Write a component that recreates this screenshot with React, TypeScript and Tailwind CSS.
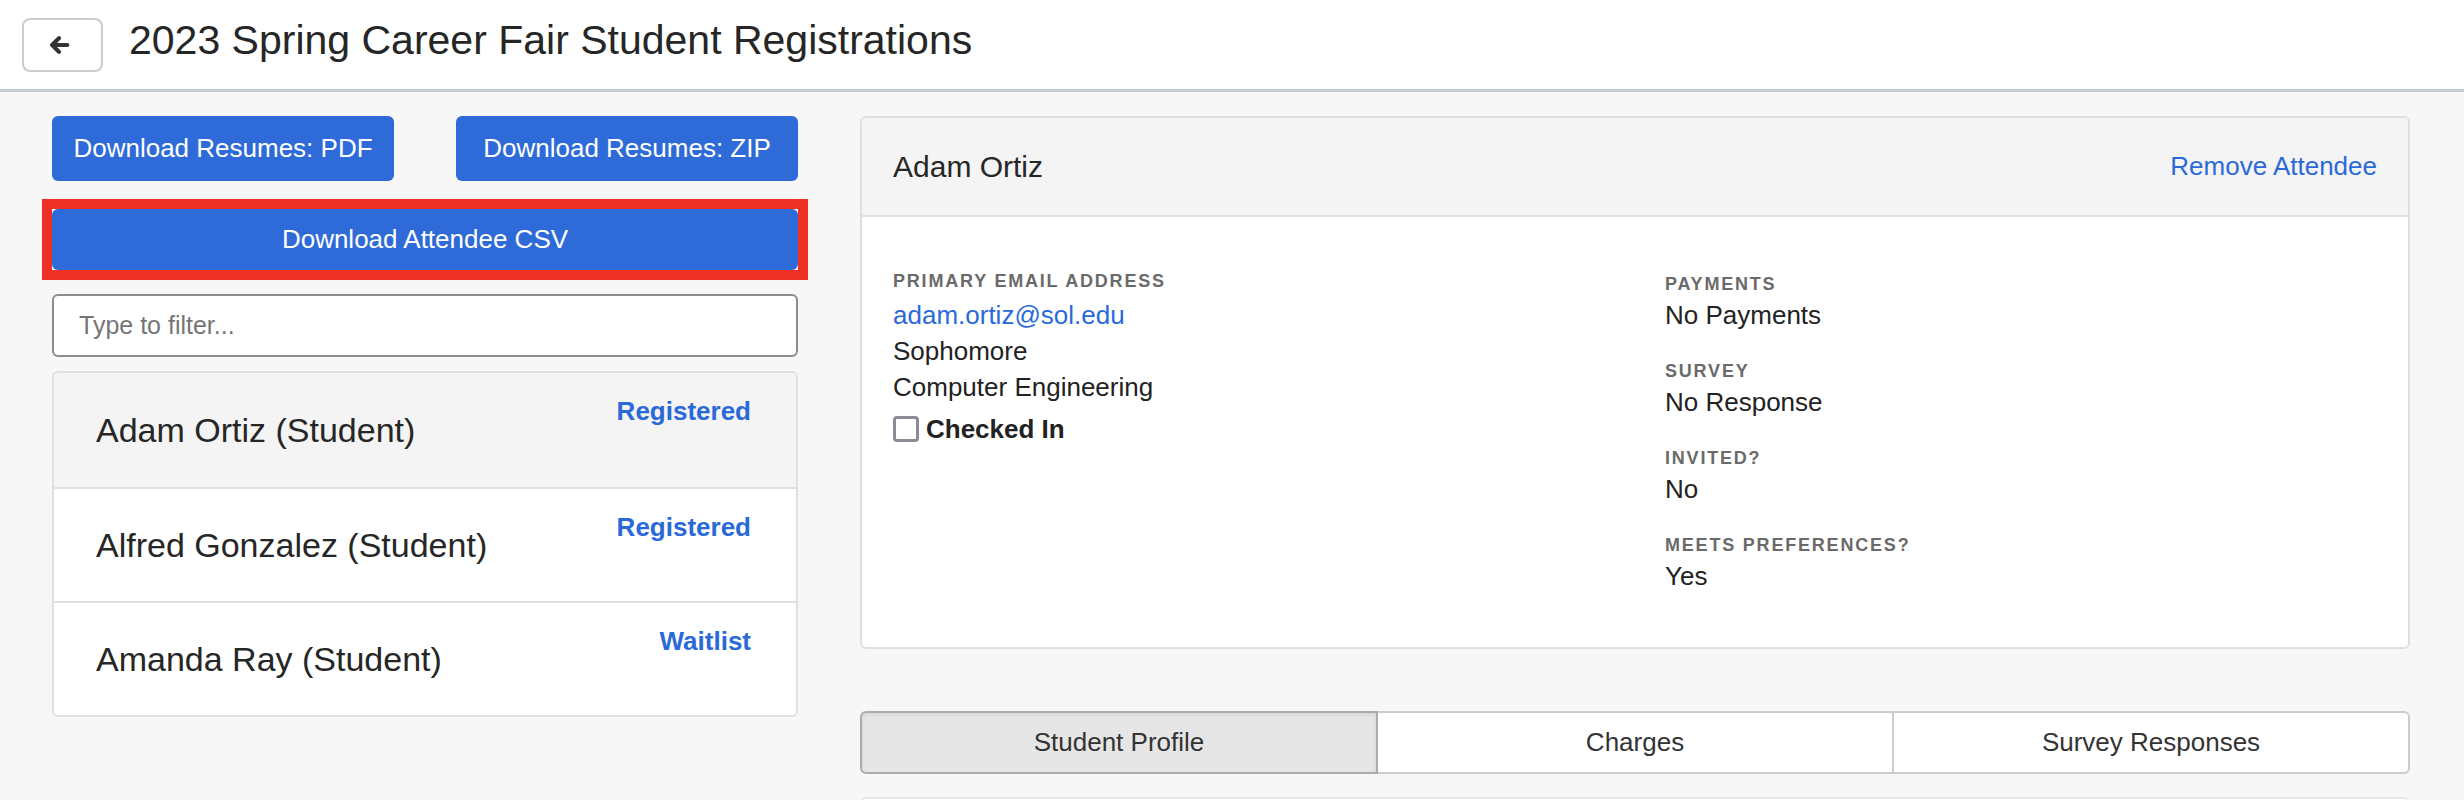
import React from 'react';

const attendees = [
  { name: 'Adam Ortiz (Student)', status: 'Registered', active: true },
  { name: 'Alfred Gonzalez (Student)', status: 'Registered', active: false },
  { name: 'Amanda Ray (Student)', status: 'Waitlist', active: false },
];

const details = [
  { label: 'Payments', value: 'No Payments' },
  { label: 'Survey', value: 'No Response' },
  { label: 'Invited?', value: 'No' },
  { label: 'Meets Preferences?', value: 'Yes' },
];

function BackArrow() {
  return (
    <svg width="22" height="22" viewBox="0 0 24 24" fill="none" stroke="#333" strokeWidth="4.6" strokeLinecap="round" strokeLinejoin="round">
      <path d="M21 12H5" />
      <path d="M12 4.5L4.5 12 12 19.5" />
    </svg>
  );
}

function Label({ children }: { children: React.ReactNode }) {
  return (
    <div className="text-[18px] leading-[22px] font-bold uppercase tracking-[0.1em] text-[#6a6a6a]">
      {children}
    </div>
  );
}

export default function App() {
  return (
    <div className="min-h-screen bg-[#f7f7f7] font-['Liberation_Sans',Arial,sans-serif] text-[#262626]">
      {/* Top bar */}
      <header className="h-[92px] bg-white border-b-[3px] border-[#c3cad2] flex items-center pl-[22px]">
        <button className="w-[81px] h-[54px] bg-white border-2 border-[#cccccc] rounded-[8px] flex items-center justify-center pr-[7px]">
          <BackArrow />
        </button>
        <h1 className="ml-[26px] mb-[7px] text-[41px] font-normal text-[#262626]">
          2023 Spring Career Fair Student Registrations
        </h1>
      </header>

      <main className="flex gap-[62px] pl-[52px] pr-[54px] pt-[24px]">
        {/* Left column */}
        <div className="w-[746px] shrink-0 flex flex-col">
          <div className="flex justify-between">
            <button className="w-[342px] h-[65px] rounded-[6px] bg-[#2e6bd8] text-white text-[26px]">
              Download Resumes: PDF
            </button>
            <button className="w-[342px] h-[65px] rounded-[6px] bg-[#2e6bd8] text-white text-[26px]">
              Download Resumes: ZIP
            </button>
          </div>

          <div className="mt-[18px] -mx-[10px] border-[10px] border-[#ee3124]">
            <button className="w-full h-[61px] rounded-[6px] bg-[#2e6bd8] text-white text-[26px]">
              Download Attendee CSV
            </button>
          </div>

          <input
            className="mt-[14px] h-[63px] w-full bg-white border-2 border-[#8c8c8c] rounded-[6px] px-[25px] text-[25px] text-[#333] placeholder:text-[#757575] outline-none"
            placeholder="Type to filter..."
          />

          <div className="mt-[14px] bg-white border-2 border-[#e0e0e0] rounded-[6px] overflow-hidden">
            {attendees.map((a, i) => (
              <div
                key={a.name}
                className={`h-[114px] flex justify-between pl-[42px] pr-[45px] ${i > 0 ? 'border-t-2 border-[#e0e0e0]' : ''} ${a.active ? 'bg-[#f4f4f4]' : 'bg-white'}`}
              >
                <span className="self-center text-[34px] text-[#262626]">{a.name}</span>
                <span className="pt-[23px] text-[26px] leading-[30px] font-bold text-[#2a6ad8]">{a.status}</span>
              </div>
            ))}
          </div>
        </div>

        {/* Right column */}
        <div className="flex-1 flex flex-col">
          <div className="bg-white border-2 border-[#dedede] rounded-[6px] overflow-hidden">
            <div className="h-[99px] bg-[#f4f4f4] border-b-2 border-[#e0e0e0] flex items-center justify-between px-[31px]">
              <span className="text-[30px] text-[#262626]">Adam Ortiz</span>
              <a className="text-[26px] text-[#2a6ad8]">Remove Attendee</a>
            </div>
            <div className="grid grid-cols-2 gap-x-[60px] px-[31px] pt-[53px] pb-[53px]">
              <div className="flex flex-col">
                <Label>Primary Email Address</Label>
                <div className="mt-[5px] text-[26px] leading-[36px] text-[#2a6ad8]">adam.ortiz@sol.edu</div>
                <div className="text-[26px] leading-[36px] text-[#222]">Sophomore</div>
                <div className="text-[26px] leading-[36px] text-[#222]">Computer Engineering</div>
                <label className="mt-[6px] flex items-center gap-[7px]">
                  <span className="w-[26px] h-[26px] border-[3px] border-[#8e8a96] rounded-[4px] bg-white" />
                  <span className="text-[26px] leading-[36px] font-bold text-[#222]">Checked In</span>
                </label>
              </div>
              <div className="flex flex-col gap-[27px] pt-[3px]">
                {details.map((d) => (
                  <div key={d.label}>
                    <Label>{d.label}</Label>
                    <div className="mt-[2px] text-[26px] leading-[36px] text-[#222]">{d.value}</div>
                  </div>
                ))}
              </div>
            </div>
          </div>

          {/* Tabs */}
          <div className="mt-[62px] flex h-[63px]">
            <button className="flex-1 bg-[#e6e6e6] border-2 border-[#acacac] rounded-l-[6px] shadow-[inset_0_2px_4px_rgba(0,0,0,0.08)] text-[26px] text-[#333]">
              Student Profile
            </button>
            <button className="flex-1 bg-white border-2 border-l-0 border-[#cccccc] text-[26px] text-[#333]">
              Charges
            </button>
            <button className="flex-1 bg-white border-2 border-l-0 border-[#cccccc] rounded-r-[6px] text-[26px] text-[#333]">
              Survey Responses
            </button>
          </div>

          <div className="mt-[23px] h-[60px] bg-white border-2 border-[#e6e6e6] rounded-[6px]" />
        </div>
      </main>
    </div>
  );
}
